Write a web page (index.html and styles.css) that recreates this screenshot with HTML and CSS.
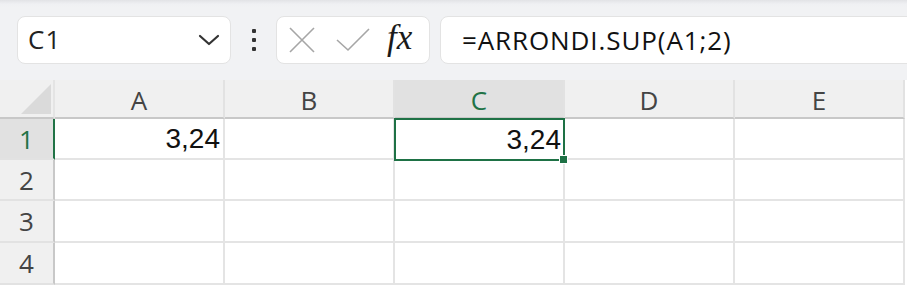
FILE: index.html
```html
<!DOCTYPE html>
<html lang="fr">
  <head>
    <meta charset="UTF-8" />
    <title>Classeur</title>
    <link rel="stylesheet" href="styles.css">
  </head>
  <body>
    <div class="toolbar">
      <div class="namebox">
        <span class="name">C1</span>
        <svg class="chevron" width="22" height="12" viewBox="0 0 22 12">
          <path d="M2 2 L11 10 L20 2" fill="none" stroke="#333" stroke-width="2.2" stroke-linecap="round" stroke-linejoin="round"/>
        </svg>
      </div>
      <div class="dots">
        <span></span><span></span><span></span>
      </div>
      <div class="fxbox">
        <svg width="26" height="26" viewBox="0 0 26 26">
          <path d="M1 1 L25 25 M25 1 L1 25" stroke="#a6a6a6" stroke-width="1.6" fill="none"/>
        </svg>
        <svg width="34" height="24" viewBox="0 0 34 24">
          <path d="M1 12 L12 22 L33 1" stroke="#a6a6a6" stroke-width="1.6" fill="none"/>
        </svg>
        <span class="fx">fx</span>
      </div>
      <div class="formula">=ARRONDI.SUP(A1;2)</div>
    </div>

    <div class="sheet">
      <div class="corner">
        <svg width="30" height="30" viewBox="0 0 30 30">
          <path d="M30 0 L30 30 L0 30 Z" fill="#dadada"/>
        </svg>
      </div>
      <div class="colhead">A</div>
      <div class="colhead">B</div>
      <div class="colhead active">C</div>
      <div class="colhead">D</div>
      <div class="colhead">E</div>

      <div class="rowhead active">1</div>
      <div class="cell">3,24</div>
      <div class="cell"></div>
      <div class="cell selected">3,24<span class="handle"></span></div>
      <div class="cell"></div>
      <div class="cell"></div>

      <div class="rowhead">2</div>
      <div class="cell"></div>
      <div class="cell"></div>
      <div class="cell"></div>
      <div class="cell"></div>
      <div class="cell"></div>

      <div class="rowhead">3</div>
      <div class="cell"></div>
      <div class="cell"></div>
      <div class="cell"></div>
      <div class="cell"></div>
      <div class="cell"></div>

      <div class="rowhead">4</div>
      <div class="cell"></div>
      <div class="cell"></div>
      <div class="cell"></div>
      <div class="cell"></div>
      <div class="cell"></div>
    </div>
  </body>
</html>
```

FILE: styles.css
```css
body {
  margin: 0;
  width: 907px;
  height: 289px;
  overflow: hidden;
  background: #fff;
  font-family: "Open Sans", "Noto Sans", sans-serif;
}

.toolbar {
  height: 80px;
  box-sizing: border-box;
  padding: 16px 0 0 17px;
  display: flex;
  align-items: flex-start;
  background: linear-gradient(#e2e3e6 0, #eff0f3 4px, #f1f2f4 8px);
}

.namebox,
.fxbox,
.formula {
  flex-shrink: 0;
  height: 48px;
  box-sizing: border-box;
  background: #fff;
  border: 1px solid #e3e3e3;
  border-radius: 8px;
  display: flex;
  align-items: center;
}

.namebox {
  width: 214px;
  padding: 0 10px 0 10px;
  justify-content: space-between;
}

.name {
  font-size: 26px;
  letter-spacing: 1px;
  color: #222;
  margin-top: -2px;
}

.dots {
  flex-shrink: 0;
  width: 45px;
  height: 48px;
  display: flex;
  flex-direction: column;
  align-items: center;
  justify-content: center;
  gap: 5px;
}

.dots span {
  width: 4px;
  height: 4px;
  background: #333;
  border-radius: 1px;
}

.fxbox {
  width: 154px;
  padding: 0 10px 0 12px;
  gap: 21px;
}

.fx {
  font-family: "Liberation Serif", serif;
  font-style: italic;
  font-size: 35px;
  color: #1a1a1a;
  margin-left: -4px;
  margin-top: -4px;
}

.formula {
  margin-left: 10px;
  width: 500px;
  padding-left: 21px;
  font-size: 26px;
  letter-spacing: 0.9px;
  color: #111;
}

.sheet {
  display: grid;
  grid-template-columns: 55px repeat(5, 170px);
  grid-template-rows: 39px 41px 41px 42px 42px;
}

.corner {
  background: #f0f0f0;
  border-right: 2px solid #e4e4e4;
  border-bottom: 2px solid #c8c8c8;
  display: flex;
  align-items: flex-end;
  justify-content: flex-end;
  padding: 0 2px 3px 0;
}

.colhead {
  background: #f0f0f0;
  border-right: 2px solid #e2e2e2;
  border-bottom: 2px solid #c8c8c8;
  display: flex;
  align-items: center;
  justify-content: center;
  font-size: 26px;
  color: #444;
  padding-top: 2px;
}

.colhead.active {
  background: #e1e1e1;
  color: #217346;
}

.rowhead {
  background: #f0f0f0;
  border-right: 2px solid #c8c8c8;
  border-bottom: 2px solid #e2e2e2;
  display: flex;
  align-items: center;
  justify-content: center;
  font-size: 26px;
  color: #444;
}

.rowhead.active {
  background: #e1e1e1;
  color: #217346;
  border-right-color: #217346;
}

.cell {
  border-right: 2px solid #e4e4e4;
  border-bottom: 2px solid #e4e4e4;
  font-family: "Liberation Sans", Arial, sans-serif;
  font-size: 28px;
  color: #111;
  display: flex;
  align-items: center;
  justify-content: flex-end;
  padding-right: 3px;
}

.cell.selected {
  position: relative;
  border: 2px solid #1e7145;
  margin: -1px 0 -1px -1px;
  padding-right: 2px;
}

.handle {
  position: absolute;
  right: -5px;
  bottom: -5px;
  width: 7px;
  height: 7px;
  background: #1e7145;
  border: 1px solid #fff;
}
```
